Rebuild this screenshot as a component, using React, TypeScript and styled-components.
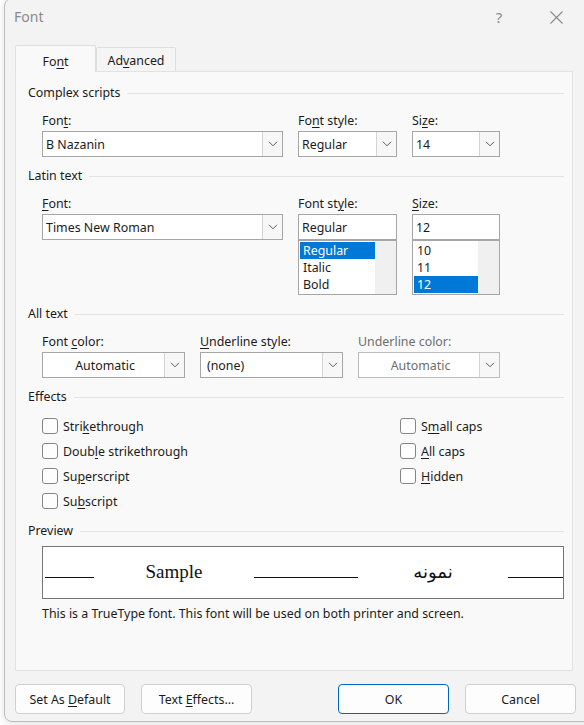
import React from "react";
import styled, { createGlobalStyle } from "styled-components";

const GlobalStyle = createGlobalStyle`
  html, body { margin: 0; padding: 0; background: #ffffff; }
  body {
    font-family: "Noto Sans", "Open Sans", "DejaVu Sans", sans-serif;
    font-size: 12.4px;
    color: #1b1b1b;
  }
  * { box-sizing: border-box; }
`;

const Screen = styled.div`
  width: 584px;
  height: 725px;
  overflow: hidden;
  background: #ffffff;
  padding-left: 4px;
`;

const Dialog = styled.div`
  width: 600px;
  height: 724px;
  margin-top: -2px;
  background: #f3f3f3;
  border: 1px solid #bcbcbc;
  border-radius: 8px;
  display: flex;
  flex-direction: column;
  box-shadow: 0 2px 8px rgba(0, 0, 0, 0.12);
`;

const TitleBar = styled.div`
  height: 46px;
  display: flex;
  align-items: flex-start;
  padding: 8px 29px 0 9px;
`;

const Title = styled.div`
  font-size: 14px;
  line-height: 20px;
  color: #8a8a8a;
  flex: 1;
`;

const TitleButton = styled.div<{ $w: number; $gap?: number }>`
  width: ${(p) => p.$w}px;
  margin-left: ${(p) => p.$gap ?? 0}px;
  height: 20px;
  display: flex;
  align-items: center;
  justify-content: center;
  color: #8a8a8a;
  font-size: 15px;
  line-height: 20px;
`;

const TabStrip = styled.div`
  height: 26px;
  margin-left: 10px;
  display: flex;
  align-items: flex-end;
`;

const Tab = styled.div<{ $active?: boolean }>`
  position: relative;
  z-index: 1;
  display: flex;
  align-items: center;
  justify-content: center;
  width: ${(p) => (p.$active ? 81 : 80)}px;
  height: ${(p) => (p.$active ? 27 : 24)}px;
  margin-bottom: ${(p) => (p.$active ? -1 : 0)}px;
  padding-top: ${(p) => (p.$active ? 4 : 1)}px;
  background: ${(p) => (p.$active ? "#f9f9f9" : "#f5f5f5")};
  border: 1px solid #dedede;
  border-bottom: none;
  border-radius: 2px 2px 0 0;
`;

const Panel = styled.div`
  margin-left: 10px;
  width: 558px;
  height: 600px;
  background: #f9f9f9;
  border: 1px solid #e2e2e2;
  padding: 13px 8px 0 12px;
  display: flex;
  flex-direction: column;
`;

const GroupTitle = styled.div<{ $top?: number }>`
  margin-top: ${(p) => p.$top ?? 0}px;
  height: 16px;
  line-height: 18px;
  display: flex;
  align-items: center;
  white-space: nowrap;
  &::after {
    content: "";
    flex: 1;
    height: 1px;
    background: #e3e3e3;
    margin-left: 7px;
  }
`;

const FieldRow = styled.div<{ $cols: string; $top: number }>`
  display: grid;
  grid-template-columns: ${(p) => p.$cols};
  column-gap: 15px;
  align-items: start;
  margin: ${(p) => p.$top}px 0 0 14px;
`;

const Field = styled.div`
  display: flex;
  flex-direction: column;
  gap: 3px;
`;

const Label = styled.div<{ $disabled?: boolean }>`
  height: 16px;
  line-height: 18px;
  white-space: nowrap;
  color: ${(p) => (p.$disabled ? "#6e6e6e" : "#1b1b1b")};
`;

const Key = styled.span`
  text-decoration: underline;
  text-underline-offset: 2px;
  text-decoration-thickness: 1px;
`;

const Combo = styled.div<{ $disabled?: boolean }>`
  display: flex;
  height: 26px;
  border: 1px solid ${(p) => (p.$disabled ? "#bdbdbd" : "#a6a6a6")};
  background: #ffffff;
  color: ${(p) => (p.$disabled ? "#6e6e6e" : "#1b1b1b")};
`;

const ComboText = styled.div<{ $center?: boolean; $pad?: number }>`
  flex: 1;
  display: flex;
  align-items: center;
  justify-content: ${(p) => (p.$center ? "center" : "flex-start")};
  padding-left: ${(p) => p.$pad ?? 3}px;
  padding-top: 1px;
  white-space: nowrap;
  overflow: hidden;
`;

const ComboButton = styled.div`
  width: 20px;
  border-left: 1px solid #d4d4d4;
  background: #f7f7f7;
  display: flex;
  align-items: center;
  justify-content: center;
`;

const TextBox = styled.div`
  height: 26px;
  border: 1px solid #a6a6a6;
  background: #ffffff;
  display: flex;
  align-items: center;
  padding: 1px 0 0 3px;
`;

const ListBox = styled.div`
  height: 55px;
  border: 1px solid #a6a6a6;
  background: #ffffff;
  display: flex;
  padding-left: 1px;
`;

const ListItems = styled.div<{ $w: number }>`
  width: ${(p) => p.$w}px;
  padding-top: 1px;
  display: flex;
  flex-direction: column;
`;

const ListItem = styled.div<{ $selected?: boolean }>`
  height: 17px;
  line-height: 18px;
  padding-left: 3px;
  background: ${(p) => (p.$selected ? "#0078d7" : "transparent")};
  color: ${(p) => (p.$selected ? "#ffffff" : "#1b1b1b")};
`;

const ScrollTrack = styled.div`
  width: 21px;
  background: #f0f0f0;
`;

const Effects = styled.div`
  display: flex;
  margin: 8px 0 0 14px;
`;

const CheckColumn = styled.div<{ $w?: number }>`
  width: ${(p) => (p.$w ? `${p.$w}px` : "auto")};
  display: flex;
  flex-direction: column;
`;

const CheckRow = styled.div`
  height: 25px;
  display: flex;
  align-items: center;
  gap: 5px;
  white-space: nowrap;
`;

const CheckLabel = styled.span`
  padding-top: 1px;
`;

const CheckBox = styled.span`
  width: 16px;
  height: 16px;
  border: 1px solid #858585;
  border-radius: 3px;
  background: #fdfdfd;
  flex: none;
`;

const PreviewBox = styled.div`
  margin: 7px 0 0 14px;
  width: 522px;
  height: 53px;
  border: 1px solid #767676;
  background: #ffffff;
  display: flex;
  align-items: baseline;
  padding: 14px 0 0 1px;
`;

const Rule = styled.span<{ $w: number; $drop?: number }>`
  display: inline-block;
  width: ${(p) => p.$w}px;
  height: 0;
  border-bottom: 1px solid #111111;
  margin-bottom: ${(p) => -(p.$drop ?? 0)}px;
`;

const SampleSlot = styled.span<{ $w: number; $rtl?: boolean }>`
  width: ${(p) => p.$w}px;
  text-align: center;
  line-height: 22px;
  color: #111111;
  font-family: ${(p) =>
    p.$rtl ? '"DejaVu Sans", sans-serif' : '"Liberation Serif", "Times New Roman", serif'};
  font-size: ${(p) => (p.$rtl ? 18 : 19)}px;
`;

const Caption = styled.div`
  margin: 6px 0 0 14px;
  height: 16px;
  line-height: 18px;
  white-space: nowrap;
`;

const ButtonRow = styled.div`
  display: flex;
  margin: 13px 0 0 10px;
`;

const Button = styled.button<{ $w: number; $gap?: number; $primary?: boolean }>`
  width: ${(p) => p.$w}px;
  height: 30px;
  margin-left: ${(p) => p.$gap ?? 0}px;
  background: #fdfdfd;
  border: 1px solid ${(p) => (p.$primary ? "#0067c0" : "#d0d0d0")};
  border-radius: 4px;
  font-family: inherit;
  font-size: 12.4px;
  color: #1b1b1b;
  padding: 1px 0 0;
`;

const Chevron = () => (
  <svg width="10" height="6" viewBox="0 0 10 6">
    <path d="M1 0.8 L5 4.8 L9 0.8" stroke="#5c5c5c" strokeWidth="1" fill="none" />
  </svg>
);

const CloseGlyph = () => (
  <svg width="13" height="13" viewBox="0 0 13 13">
    <path d="M0.5 0.5 L12.5 12.5 M12.5 0.5 L0.5 12.5" stroke="#8a8a8a" strokeWidth="1.1" fill="none" />
  </svg>
);

type ComboProps = {
  value: string;
  center?: boolean;
  pad?: number;
  disabled?: boolean;
};

const DropDown = ({ value, center, pad, disabled }: ComboProps) => (
  <Combo $disabled={disabled}>
    <ComboText $center={center} $pad={pad}>
      {value}
    </ComboText>
    <ComboButton>
      <Chevron />
    </ComboButton>
  </Combo>
);

const Check = ({ children }: { children: React.ReactNode }) => (
  <CheckRow>
    <CheckBox />
    <CheckLabel>{children}</CheckLabel>
  </CheckRow>
);

export default function App() {
  return (
    <Screen>
      <GlobalStyle />
      <Dialog>
        <TitleBar>
          <Title>Font</Title>
          <TitleButton $w={40}>?</TitleButton>
          <TitleButton $w={35} $gap={20}>
            <CloseGlyph />
          </TitleButton>
        </TitleBar>

        <TabStrip>
          <Tab $active>
            Fo<Key>n</Key>t
          </Tab>
          <Tab>
            Ad<Key>v</Key>anced
          </Tab>
        </TabStrip>

        <Panel>
          <GroupTitle>Complex scripts</GroupTitle>
          <FieldRow $cols="241px 99px 88px" $top={11}>
            <Field>
              <Label>
                Fon<Key>t</Key>:
              </Label>
              <DropDown value="B Nazanin" />
            </Field>
            <Field>
              <Label>
                Fo<Key>n</Key>t style:
              </Label>
              <DropDown value="Regular" />
            </Field>
            <Field>
              <Label>
                Si<Key>z</Key>e:
              </Label>
              <DropDown value="14" />
            </Field>
          </FieldRow>

          <GroupTitle $top={11}>Latin text</GroupTitle>
          <FieldRow $cols="241px 99px 88px" $top={11}>
            <Field>
              <Label>
                <Key>F</Key>ont:
              </Label>
              <DropDown value="Times New Roman" />
            </Field>
            <Field>
              <Label>
                Font st<Key>y</Key>le:
              </Label>
              <div>
                <TextBox>Regular</TextBox>
                <ListBox>
                  <ListItems $w={75}>
                    <ListItem $selected>Regular</ListItem>
                    <ListItem>Italic</ListItem>
                    <ListItem>Bold</ListItem>
                  </ListItems>
                  <ScrollTrack />
                </ListBox>
              </div>
            </Field>
            <Field>
              <Label>
                <Key>S</Key>ize:
              </Label>
              <div>
                <TextBox>12</TextBox>
                <ListBox>
                  <ListItems $w={64}>
                    <ListItem>10</ListItem>
                    <ListItem>11</ListItem>
                    <ListItem $selected>12</ListItem>
                  </ListItems>
                  <ScrollTrack />
                </ListBox>
              </div>
            </Field>
          </FieldRow>

          <GroupTitle $top={11}>All text</GroupTitle>
          <FieldRow $cols="143px 143px 142px" $top={11}>
            <Field>
              <Label>
                Font <Key>c</Key>olor:
              </Label>
              <DropDown value="Automatic" center />
            </Field>
            <Field>
              <Label>
                <Key>U</Key>nderline style:
              </Label>
              <DropDown value="(none)" pad={6} />
            </Field>
            <Field>
              <Label $disabled>Underline color:</Label>
              <DropDown value="Automatic" center disabled />
            </Field>
          </FieldRow>

          <GroupTitle $top={11}>Effects</GroupTitle>
          <Effects>
            <CheckColumn $w={358}>
              <Check>
                Stri<Key>k</Key>ethrough
              </Check>
              <Check>
                Doub<Key>l</Key>e strikethrough
              </Check>
              <Check>
                Su<Key>p</Key>erscript
              </Check>
              <Check>
                Su<Key>b</Key>script
              </Check>
            </CheckColumn>
            <CheckColumn>
              <Check>
                S<Key>m</Key>all caps
              </Check>
              <Check>
                <Key>A</Key>ll caps
              </Check>
              <Check>
                <Key>H</Key>idden
              </Check>
            </CheckColumn>
          </Effects>

          <GroupTitle $top={10}>Preview</GroupTitle>
          <PreviewBox>
            <Rule $w={49} style={{ marginLeft: 1 }} />
            <SampleSlot $w={160}>Sample</SampleSlot>
            <Rule $w={50} />
            <Rule $w={54} $drop={4} />
            <SampleSlot $w={150} $rtl>
              نمونه
            </SampleSlot>
            <Rule $w={55} $drop={4} />
          </PreviewBox>
          <Caption>
            This is a TrueType font. This font will be used on both printer and screen.
          </Caption>
        </Panel>

        <ButtonRow>
          <Button $w={110}>
            Set As <Key>D</Key>efault
          </Button>
          <Button $w={111} $gap={16}>
            Text <Key>E</Key>ffects...
          </Button>
          <Button $w={111} $gap={86} $primary>
            OK
          </Button>
          <Button $w={111} $gap={16}>
            Cancel
          </Button>
        </ButtonRow>
      </Dialog>
    </Screen>
  );
}
